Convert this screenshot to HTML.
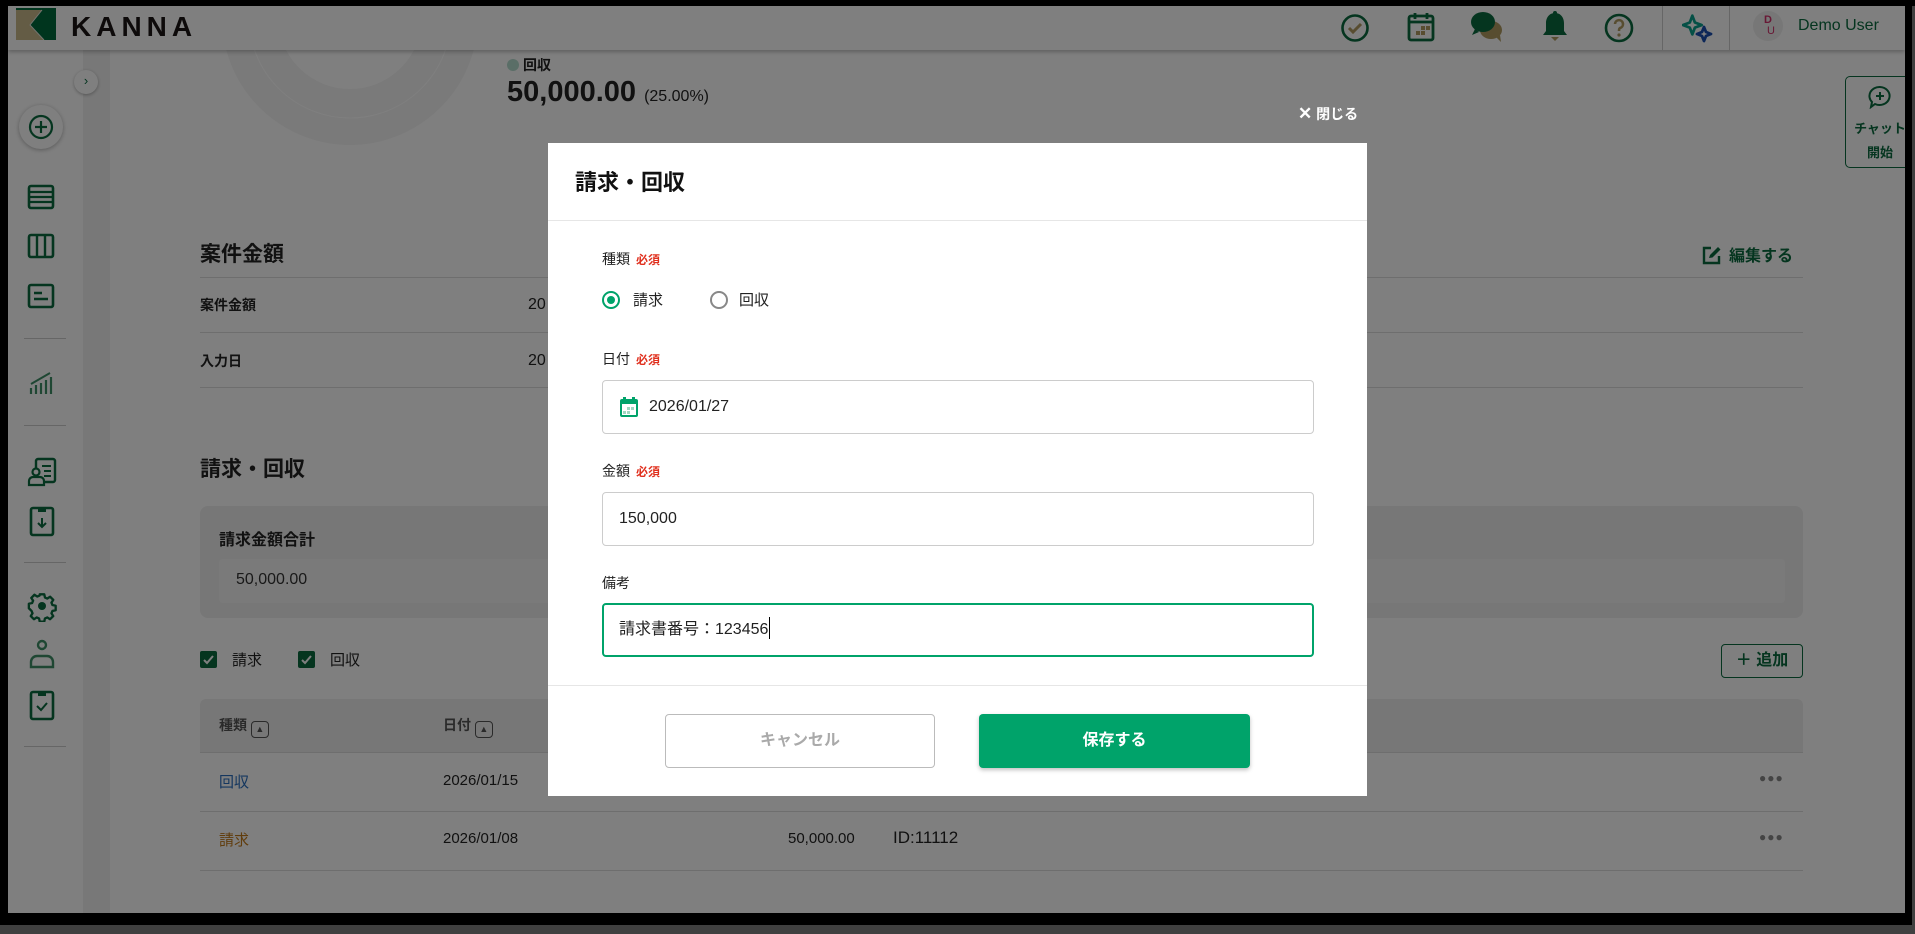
<!DOCTYPE html>
<html><head><meta charset="utf-8">
<style>
*{box-sizing:border-box;margin:0;padding:0}
html,body{width:1915px;height:934px;overflow:hidden;background:#000;font-family:"Liberation Sans","Noto Sans CJK JP",sans-serif;color:#222}
.a{position:absolute}
#page{position:absolute;left:8px;top:6px;width:1897px;height:907px;background:#fff;overflow:hidden}
#hdr{left:0;top:0;width:1897px;height:44px;background:#fff;box-shadow:0 2px 4px rgba(0,0,0,.25)}
#side{left:0;top:44px;width:75px;height:870px;background:#fff}
#stripe{left:75px;top:44px;width:27px;height:870px;background:#f0f0f0}
.div{position:absolute;left:16px;width:42px;height:1px;background:#ccc}
.ic{position:absolute}
.line{position:absolute;left:192px;width:1603px;height:1px;background:#ddd}
.b{font-weight:bold}
#ov{left:0;top:0;width:1915px;height:934px;background:rgba(0,0,0,.5)}
#modal{left:548px;top:143px;width:819px;height:653px;background:#fff}
.lbl{position:absolute;left:54px;font-size:14px;color:#222}
.req{color:#e0301e;font-size:12px;font-weight:bold;margin-left:6px}
.inp{position:absolute;left:54px;width:712px;height:54px;border:1px solid #ccc;border-radius:4px;font-size:16px;color:#222;padding-left:16px;line-height:52px}
.cb{position:absolute;width:17px;height:17px;background:#0a6b3f;border-radius:2px}
</style></head><body>
<div id="page">
  <!-- content -->
  <svg class="a" style="left:192px;top:-150px" width="300" height="300"><circle cx="150" cy="161" r="100" fill="none" stroke="#f4f4f4" stroke-width="56"/><circle cx="150" cy="161" r="101" fill="none" stroke="#fff" stroke-width="1"/></svg>
  <div class="a" style="left:499px;top:49px;font-size:14px"><span style="display:inline-block;width:12px;height:12px;border-radius:50%;background:#b5dccf;margin-right:4px;vertical-align:-1px"></span><b>回収</b></div>
  <div class="a" style="left:499px;top:70px;font-size:29px;font-weight:bold">50,000.00 <span style="font-size:16px;font-weight:normal">(25.00%)</span></div>
  <div class="a b" style="left:192px;top:232px;font-size:21px">案件金額</div>
  <div class="a b" style="left:1693px;top:236px;font-size:16px;color:#0a6b3f">
    <svg width="22" height="20" viewBox="0 0 22 20" style="vertical-align:-4px;margin-right:6px"><path d="M10 3H3v15h15v-7" fill="none" stroke="#0a6b3f" stroke-width="2.4"/><path d="M8 13l1-3 8-8 2.5 2.5-8 8z" fill="#0a6b3f"/></svg>編集する</div>
  <div class="line" style="top:271px"></div>
  <div class="a b" style="left:192px;top:289px;font-size:14px">案件金額</div>
  <div class="a" style="left:520px;top:290px;font-size:16px">20</div>
  <div class="line" style="top:326px"></div>
  <div class="a b" style="left:192px;top:345px;font-size:14px">入力日</div>
  <div class="a" style="left:520px;top:346px;font-size:16px">20</div>
  <div class="line" style="top:381px"></div>
  <div class="a b" style="left:192px;top:447px;font-size:21px">請求・回収</div>
  <div class="a" style="left:192px;top:500px;width:1603px;height:112px;background:#eeeeee;border-radius:8px"></div>
  <div class="a b" style="left:211px;top:520px;font-size:16px">請求金額合計</div>
  <div class="a" style="left:211px;top:553px;width:1566px;height:44px;background:#f5f5f5;border-radius:4px;font-size:16px;padding:12px 17px;color:#333">50,000.00</div>
  <div class="cb" style="left:192px;top:645px"><svg width="17" height="17"><path d="M4 9l3 3 6-7" fill="none" stroke="#fff" stroke-width="2"/></svg></div>
  <div class="a" style="left:224px;top:643px;font-size:15px">請求</div>
  <div class="cb" style="left:290px;top:645px"><svg width="17" height="17"><path d="M4 9l3 3 6-7" fill="none" stroke="#fff" stroke-width="2"/></svg></div>
  <div class="a" style="left:322px;top:643px;font-size:15px">回収</div>
  <div class="a b" style="left:1713px;top:638px;width:82px;height:34px;border:1px solid #0a6b3f;border-radius:4px;color:#0a6b3f;font-size:16px;text-align:center;line-height:32px">＋ 追加</div>
  <div class="a" style="left:192px;top:693px;width:1603px;height:53px;background:#eeeeee;border-radius:6px 6px 0 0"></div>
  <div class="a b" style="left:211px;top:709px;font-size:14px;color:#555">種類 <span style="display:inline-block;width:18px;height:17px;border:1.5px solid #555;border-radius:4px;font-size:9px;text-align:center;vertical-align:-2px;line-height:14px">▲</span></div>
  <div class="a b" style="left:435px;top:709px;font-size:14px;color:#555">日付 <span style="display:inline-block;width:18px;height:17px;border:1.5px solid #555;border-radius:4px;font-size:9px;text-align:center;vertical-align:-2px;line-height:14px">▲</span></div>
  <div class="line" style="top:746px"></div>
  <div class="a" style="left:211px;top:765px;font-size:15px;color:#2a6fbf">回収</div>
  <div class="a" style="left:435px;top:766px;font-size:15px">2026/01/15</div>
  <div class="a b" style="left:1751px;top:765px;font-size:12px;color:#888;letter-spacing:1px">●●●</div>
  <div class="line" style="top:805px"></div>
  <div class="a" style="left:211px;top:823px;font-size:15px;color:#c27a1a">請求</div>
  <div class="a" style="left:435px;top:824px;font-size:15px">2026/01/08</div>
  <div class="a" style="left:780px;top:824px;font-size:15px">50,000.00</div>
  <div class="a" style="left:885px;top:822px;font-size:17px">ID:11112</div>
  <div class="a b" style="left:1751px;top:824px;font-size:12px;color:#888;letter-spacing:1px">●●●</div>
  <div class="line" style="top:864px"></div>

  <div class="a" id="stripe"></div>
  <div class="a" id="side">
    <div class="a" style="left:66px;top:20px;width:24px;height:24px;border-radius:50%;background:#fff;box-shadow:0 1px 3px rgba(0,0,0,.3);font-size:13px;color:#0a6b3f;text-align:center;line-height:22px">›</div>
    <div class="a" style="left:11px;top:55px;width:44px;height:44px;border-radius:50%;background:#fff;box-shadow:0 1px 5px rgba(0,0,0,.3)"></div>
    <svg class="ic" style="left:20px;top:64px" width="26" height="26" viewBox="0 0 26 26"><circle cx="13" cy="13" r="11" fill="none" stroke="#0a6b3f" stroke-width="2.2"/><path d="M13 7v12M7 13h12" stroke="#0a6b3f" stroke-width="2.2"/></svg>
    <svg class="ic" style="left:19px;top:133px" width="28" height="28" viewBox="0 0 28 28"><rect x="2" y="3" width="24" height="22" rx="2" fill="none" stroke="#0a6b3f" stroke-width="2.6"/><path d="M2 9h24M2 14h24M2 19h24" stroke="#0a6b3f" stroke-width="2.2"/></svg>
    <svg class="ic" style="left:19px;top:182px" width="28" height="28" viewBox="0 0 28 28"><rect x="2" y="3" width="24" height="22" rx="2" fill="none" stroke="#0a6b3f" stroke-width="2.6"/><path d="M10 3v22M18 3v22" stroke="#0a6b3f" stroke-width="2.4"/></svg>
    <svg class="ic" style="left:19px;top:232px" width="28" height="28" viewBox="0 0 28 28"><rect x="2" y="3" width="24" height="22" rx="2" fill="none" stroke="#0a6b3f" stroke-width="2.6"/><path d="M7 11h8M7 17h14" stroke="#0a6b3f" stroke-width="2.4"/></svg>
    <div class="div" style="top:288px"></div>
    <svg class="ic" style="left:20px;top:320px" width="28" height="28" viewBox="0 0 28 28"><path d="M3 24v-6M8 24v-9M13 24v-11M18 24v-14M23 24v-17" stroke="#3e8f67" stroke-width="2.2"/><path d="M3 14L22 3" stroke="#3e8f67" stroke-width="2"/></svg>
    <div class="div" style="top:375px"></div>
    <svg class="ic" style="left:18px;top:406px" width="32" height="32" viewBox="0 0 32 32"><rect x="10" y="3" width="19" height="23" rx="2" fill="none" stroke="#0a6b3f" stroke-width="2.4"/><path d="M16 10h9M18 15h7M18 20h7" stroke="#0a6b3f" stroke-width="2"/><circle cx="10" cy="16" r="3.5" fill="#fff" stroke="#0a6b3f" stroke-width="2.2"/><path d="M3 29v-4a4 4 0 0 1 4-4h7a4 4 0 0 1 4 4v4z" fill="#fff" stroke="#0a6b3f" stroke-width="2.2"/></svg>
    <svg class="ic" style="left:20px;top:455px" width="28" height="32" viewBox="0 0 28 32"><rect x="3" y="3" width="22" height="27" rx="2" fill="none" stroke="#0a6b3f" stroke-width="2.6"/><path d="M10 3h8v4h-8z" fill="#0a6b3f"/><path d="M14 13v9M10 18l4 4 4-4" fill="none" stroke="#0a6b3f" stroke-width="2"/></svg>
    <div class="div" style="top:512px"></div>
    <svg class="ic" style="left:18px;top:540px" width="32" height="32" viewBox="0 0 32 32"><g fill="none" stroke="#0a6b3f" stroke-width="2.6" stroke-linejoin="round"><path d="M13.5 3h5l.8 3.6 2.6 1.1 3.1-2 3.5 3.5-2 3.1 1.1 2.6 3.6.8v5l-3.6.8-1.1 2.6 2 3.1-3.5 3.5-3.1-2-2.6 1.1-.8 3.6h-5l-.8-3.6-2.6-1.1-3.1 2-3.5-3.5 2-3.1-1.1-2.6L1.4 18.5v-5l3.6-.8 1.1-2.6-2-3.1 3.5-3.5 3.1 2 2.6-1.1z" transform="translate(16 16) scale(.9) translate(-16 -16)"/></g><circle cx="16" cy="16" r="4" fill="#0a6b3f"/></svg>
    <svg class="ic" style="left:19px;top:588px" width="30" height="32" viewBox="0 0 30 32"><circle cx="15" cy="7" r="4" fill="none" stroke="#3e8f67" stroke-width="2.4"/><path d="M4 29v-5a6 6 0 0 1 6-6h10a6 6 0 0 1 6 6v5z" fill="none" stroke="#3e8f67" stroke-width="2.4"/></svg>
    <svg class="ic" style="left:20px;top:639px" width="28" height="32" viewBox="0 0 28 32"><rect x="3" y="3" width="22" height="27" rx="2" fill="none" stroke="#0a6b3f" stroke-width="2.6"/><path d="M10 3h8v4h-8z" fill="#0a6b3f"/><path d="M9 17l4 4 6-7" fill="none" stroke="#0a6b3f" stroke-width="2"/></svg>
    <div class="div" style="top:696px"></div>
  </div>
  <div class="a" id="hdr">
    <svg class="a" style="left:8px;top:2px" width="40" height="32" viewBox="0 0 40 32"><rect width="40" height="32" fill="#c8b88a"/><path d="M0 0H40V32H28L14 17 26 2H0z" fill="#006b3c"/><path d="M26 2L14 17 28 32" fill="none" stroke="#e8e8e0" stroke-width="1"/></svg>
    <div class="a" style="left:63px;top:5px;font-size:28px;font-weight:bold;letter-spacing:5px;color:#1a1414">KANNA</div>
    <svg class="a" style="left:1332px;top:7px" width="30" height="30" viewBox="0 0 30 30"><circle cx="15" cy="15" r="12.5" fill="none" stroke="#0a6b3f" stroke-width="2.6"/><path d="M9 15l4 4 8-8" fill="none" stroke="#b09a60" stroke-width="3"/></svg>
    <svg class="a" style="left:1398px;top:5px" width="30" height="32" viewBox="0 0 30 32"><rect x="3" y="5" width="24" height="24" rx="2" fill="none" stroke="#0a6b3f" stroke-width="2.8"/><path d="M3 11h24M9 2v6M21 2v6" stroke="#0a6b3f" stroke-width="2.8"/><rect x="15" y="15" width="4" height="4" fill="#b09a60"/><rect x="20" y="15" width="4" height="4" fill="#b09a60"/><rect x="10" y="20" width="4" height="4" fill="#b09a60"/><rect x="15" y="20" width="4" height="4" fill="#b09a60"/></svg>
    <svg class="a" style="left:1462px;top:4px" width="34" height="34" viewBox="0 0 34 34"><ellipse cx="21" cy="20" rx="11" ry="9" fill="#b09a60"/><path d="M26 27l5 5-1-7z" fill="#b09a60"/><ellipse cx="13" cy="12" rx="12" ry="10" fill="#0a6b3f"/><path d="M5 19l-3 6 7-3z" fill="#0a6b3f"/></svg>
    <svg class="a" style="left:1532px;top:4px" width="30" height="34" viewBox="0 0 30 34"><path d="M15 3c6 0 9 5 9 10v8l3 4H3l3-4v-8c0-5 3-10 9-10z" fill="#0a6b3f"/><path d="M11 27h8l-4 4z" fill="#b09a60"/><circle cx="15" cy="3" r="2" fill="#0a6b3f"/></svg>
    <svg class="a" style="left:1595px;top:6px" width="32" height="32" viewBox="0 0 32 32"><circle cx="16" cy="16" r="13" fill="none" stroke="#0a6b3f" stroke-width="2.6"/><path d="M12 12a4 4 0 1 1 5 4c-1 .5-1 1.5-1 3" fill="none" stroke="#b09a60" stroke-width="2.6"/><circle cx="16" cy="23" r="1.6" fill="#b09a60"/></svg>
    <div class="a" style="left:1654px;top:0;width:1px;height:44px;background:#ccc"></div>
    <svg class="a" style="left:1674px;top:7px" width="32" height="32" viewBox="0 0 32 32"><path d="M11 2l3 8 8 3-8 3-3 8-3-8-8-3 8-3z" transform="translate(1 1) scale(.85)" fill="none" stroke="#0ba08c" stroke-width="3.2" stroke-linejoin="round"/><path d="M23 16l2 5 5 2-5 2-2 5-2-5-5-2 5-2z" transform="translate(-1 -2)" fill="none" stroke="#1a4fb0" stroke-width="2.8" stroke-linejoin="round"/></svg>
    <div class="a" style="left:1721px;top:0;width:1px;height:44px;background:#ccc"></div>
    <div class="a" style="left:1745px;top:5px;width:30px;height:30px;border-radius:50%;background:#eee;font-size:11px;line-height:11px;text-align:center;padding-top:4px"><b style="color:#d0306a">D</b><br><span style="color:#d0306a;margin-left:6px">U</span></div>
    <div class="a" style="left:1790px;top:11px;font-size:16px;color:#0a6b3f">Demo User</div>
  </div>
  <div class="a" style="left:1837px;top:70px;width:70px;height:92px;border:1px solid #0a6b3f;border-radius:5px;background:#fff;text-align:center;font-size:13px;font-weight:bold;color:#0a6b3f;padding-top:8px;line-height:24px">
    <svg width="24" height="24" viewBox="0 0 24 24"><path d="M12 2a10 9 0 1 1-5 17l-4 3 1-5A10 9 0 0 1 12 2z" fill="none" stroke="#0a6b3f" stroke-width="2"/><path d="M12 7v8M8 11h8" stroke="#0a6b3f" stroke-width="2"/></svg><br>チャット<br>開始</div>
</div>
<div class="a" style="left:0;top:925px;width:1915px;height:9px;background:#808080"></div>
<div class="a" style="left:1912px;top:0;width:3px;height:934px;background:#808080"></div>
<div class="a" id="ov"></div>
<div class="a" style="left:0;top:0;width:1915px;height:6px;background:#000"></div>
<div class="a" style="left:0;top:913px;width:1912px;height:12px;background:#000"></div>
<div class="a" style="left:1905px;top:0;width:7px;height:925px;background:#000"></div>
<div class="a" style="left:0;top:0;width:8px;height:925px;background:#000"></div>

<div class="a b" style="left:1298px;top:104px;font-size:14px;color:#fff"><span style="font-size:17px">✕</span> 閉じる</div>
<div class="a" id="modal">
  <div class="a b" style="left:27px;top:22px;font-size:22px;color:#111">請求・回収</div>
  <div class="a" style="left:0;top:77px;width:819px;height:1px;background:#e6e6e6"></div>
  <div class="lbl" style="top:106px">種類<span class="req">必須</span></div>
  <div class="a" style="left:54px;top:148px;width:18px;height:18px;border-radius:50%;border:2px solid #00a36a"><div class="a" style="left:3px;top:3px;width:8px;height:8px;border-radius:50%;background:#00a36a"></div></div>
  <div class="a" style="left:85px;top:146px;font-size:15px">請求</div>
  <div class="a" style="left:162px;top:148px;width:18px;height:18px;border-radius:50%;border:2px solid #888"></div>
  <div class="a" style="left:191px;top:146px;font-size:15px">回収</div>
  <div class="lbl" style="top:206px">日付<span class="req">必須</span></div>
  <div class="inp" style="top:237px;padding-left:46px"><svg class="a" style="left:16px;top:15px" width="20" height="22" viewBox="0 0 20 22"><rect x="1" y="3" width="18" height="18" rx="2" fill="#00a36a"/><rect x="3" y="8" width="14" height="11" fill="#fff"/><rect x="4" y="1" width="3" height="4" fill="#00a36a"/><rect x="13" y="1" width="3" height="4" fill="#00a36a"/><rect x="8" y="11" width="3" height="3" fill="#9fd8c0"/><rect x="12" y="11" width="3" height="3" fill="#9fd8c0"/><rect x="4" y="15" width="3" height="3" fill="#9fd8c0"/><rect x="8" y="15" width="3" height="3" fill="#9fd8c0"/></svg>2026/01/27</div>
  <div class="lbl" style="top:318px">金額<span class="req">必須</span></div>
  <div class="inp" style="top:349px">150,000</div>
  <div class="lbl" style="top:430px">備考</div>
  <div class="inp" style="top:460px;border:2px solid #00a36a;padding-left:15px;line-height:50px">請求書番号：123456<span style="border-left:1px solid #000;margin-left:1px;height:22px;display:inline-block;vertical-align:-5px"></span></div>
  <div class="a" style="left:0;top:542px;width:819px;height:1px;background:#e6e6e6"></div>
  <div class="a b" style="left:117px;top:571px;width:270px;height:54px;border:1px solid #bbb;border-radius:4px;text-align:center;line-height:52px;font-size:16px;color:#aaa">キャンセル</div>
  <div class="a b" style="left:431px;top:571px;width:271px;height:54px;background:#00a36a;border-radius:4px;text-align:center;line-height:54px;font-size:16px;color:#fff;box-shadow:0 2px 4px rgba(0,0,0,.25)">保存する</div>
</div>
</body></html>
